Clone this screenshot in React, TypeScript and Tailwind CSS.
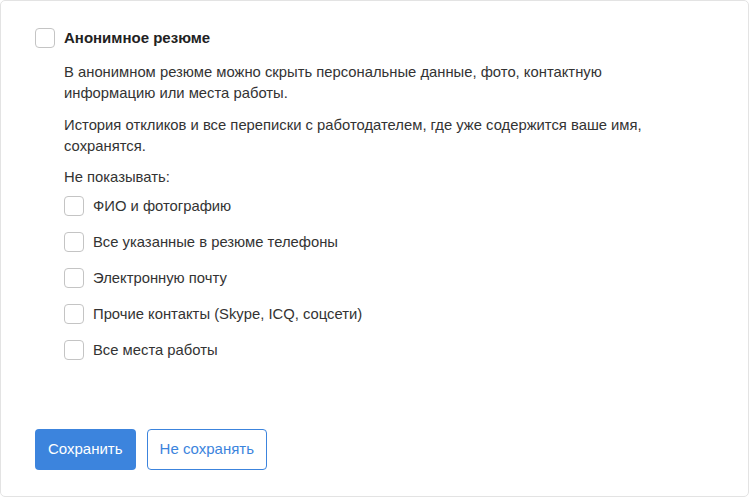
import React from "react"

const font = { fontFamily: '"Liberation Sans", Arial, sans-serif' }

function Box() {
  return <span className="block h-5 w-5 shrink-0 rounded-[4px] border border-[#c4c4c4] bg-white" />
}

const options = [
  "ФИО и фотографию",
  "Все указанные в резюме телефоны",
  "Электронную почту",
  "Прочие контакты (Skype, ICQ, соцсети)",
  "Все места работы",
]

export default function App() {
  return (
    <div className="h-[498px] w-[750px] bg-white p-0" style={font}>
      <div className="flex h-[497px] w-[749px] flex-col rounded-[5px] border border-[#e3e3e3] px-[34px] pt-[26px] text-[#333]">
        <label className="flex items-center gap-[9px]">
          <Box />
          <span className="text-[15px] font-bold text-[#222]">Анонимное резюме</span>
        </label>
        <div className="pl-[29px] pt-[12px] text-[14.8px] leading-[21px]">
          <p>
            В анонимном резюме можно скрыть персональные данные, фото, контактную
            <br />
            информацию или места работы.
          </p>
          <p className="mt-[11px]">
            История откликов и все переписки с работодателем, где уже содержится ваше имя,
            <br />
            сохранятся.
          </p>
          <p className="mt-[10px]">Не показывать:</p>
          <div className="mt-[8px] flex flex-col gap-[15px]">
            {options.map((o) => (
              <label key={o} className="flex items-center gap-[9px]">
                <Box />
                <span>{o}</span>
              </label>
            ))}
          </div>
        </div>
        <div className="mt-auto mb-[26px] flex gap-[11px]">
          <button className="h-[41px] rounded-[4px] bg-[#3c84dd] px-[13px] text-[15px] text-white">Сохранить</button>
          <button className="h-[41px] rounded-[4px] border border-[#3c84dd] bg-white px-[12px] text-[15px] text-[#3c84dd]">
            Не сохранять
          </button>
        </div>
      </div>
    </div>
  )
}
